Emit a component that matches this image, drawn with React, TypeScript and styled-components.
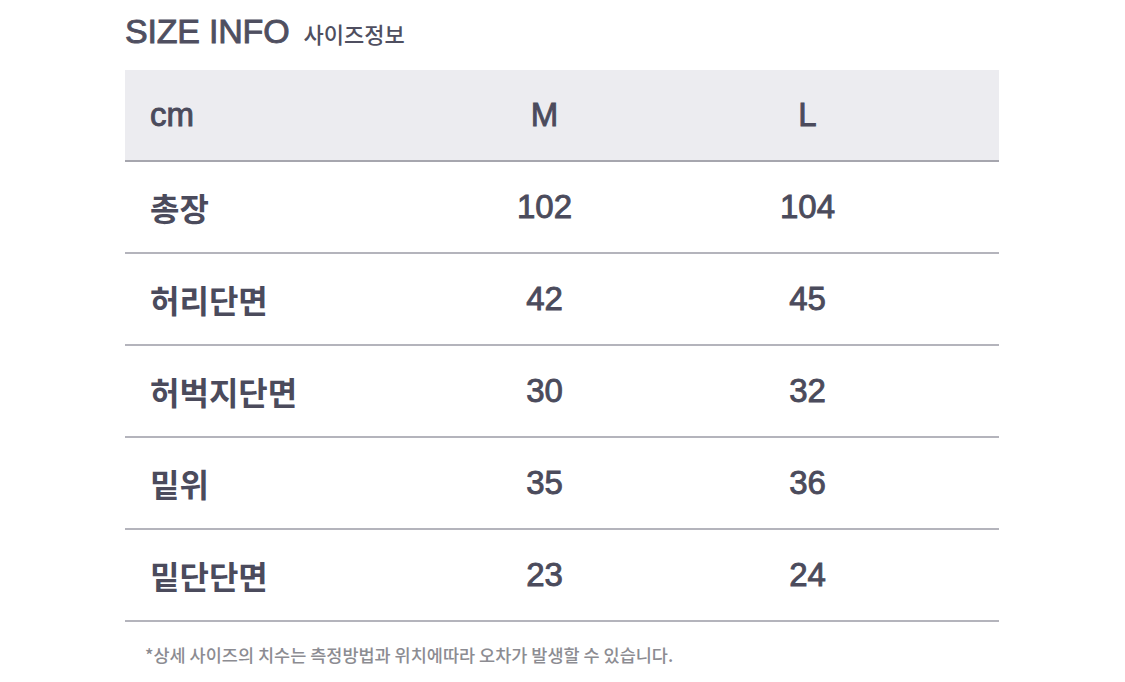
import React from 'react';
import styled, { createGlobalStyle } from 'styled-components';

const GlobalStyle = createGlobalStyle`
  html, body {
    margin: 0;
    padding: 0;
    background: #ffffff;
  }
  body {
    font-family: "Liberation Sans", "Noto Sans CJK KR", sans-serif;
    color: #4b4b5c;
  }
`;

const Page = styled.div`
  width: 1125px;
  height: 682px;
  padding: 14px 0 0 125px;
  box-sizing: border-box;
  overflow: hidden;
`;

const Title = styled.div`
  display: flex;
  align-items: baseline;
  gap: 14px;
  height: 34px;
  margin-bottom: 22px;
`;

const TitleMain = styled.h1`
  margin: 0;
  font-family: "Liberation Sans", "Noto Sans CJK KR", sans-serif;
  font-size: 34px;
  line-height: 34px;
  font-weight: 400;
  color: #4f4f60;
  letter-spacing: -0.2px;
  -webkit-text-stroke: 0.9px #4f4f60;
`;

const TitleSub = styled.span`
  font-family: "Noto Sans CJK KR", sans-serif;
  font-size: 22px;
  font-weight: 500;
  color: #4f4f60;
`;

const Table = styled.div`
  width: 874px;
`;

const Row = styled.div<{ $head?: boolean }>`
  display: grid;
  grid-template-columns: 288px 263px 263px 1fr;
  align-items: center;
  height: 90px;
  background: ${p => (p.$head ? '#ececf0' : '#ffffff')};
  border-bottom: 2px solid ${p => (p.$head ? '#a6a6ae' : '#b4b4bc')};
`;

const Label = styled.div<{ $latin?: boolean }>`
  padding-left: 25px;
  font-family: ${p =>
    p.$latin
      ? '"Liberation Sans", "Noto Sans CJK KR", sans-serif'
      : '"Noto Sans CJK KR", sans-serif'};
  font-size: ${p => (p.$latin ? '33px' : '32px')};
  font-weight: ${p => (p.$latin ? 400 : 700)};
  color: #4b4b5c;
  -webkit-text-stroke: ${p => (p.$latin ? '0.9px #4b4b5c' : '0')};
`;

const Value = styled.div`
  text-align: center;
  font-family: "Liberation Sans", sans-serif;
  font-size: 33px;
  color: #4b4b5c;
  -webkit-text-stroke: 0.9px #4b4b5c;
`;

const Note = styled.p`
  margin: 20px 0 0 20px;
  font-family: "Noto Sans CJK KR", sans-serif;
  font-size: 17.5px;
  font-weight: 500;
  color: #8c8c92;
`;

const sizes = ['M', 'L'];

const rows: { label: string; values: number[] }[] = [
  { label: '총장', values: [102, 104] },
  { label: '허리단면', values: [42, 45] },
  { label: '허벅지단면', values: [30, 32] },
  { label: '밑위', values: [35, 36] },
  { label: '밑단단면', values: [23, 24] },
];

export default function App() {
  return (
    <>
      <GlobalStyle />
      <Page>
        <Title>
          <TitleMain>SIZE INFO</TitleMain>
          <TitleSub>사이즈정보</TitleSub>
        </Title>

        <Table>
          <Row $head>
            <Label $latin>cm</Label>
            {sizes.map(s => (
              <Value key={s}>{s}</Value>
            ))}
          </Row>
          {rows.map(r => (
            <Row key={r.label}>
              <Label>{r.label}</Label>
              {r.values.map((v, i) => (
                <Value key={i}>{v}</Value>
              ))}
            </Row>
          ))}
        </Table>

        <Note>*상세 사이즈의 치수는 측정방법과 위치에따라 오차가 발생할 수 있습니다.</Note>
      </Page>
    </>
  );
}
